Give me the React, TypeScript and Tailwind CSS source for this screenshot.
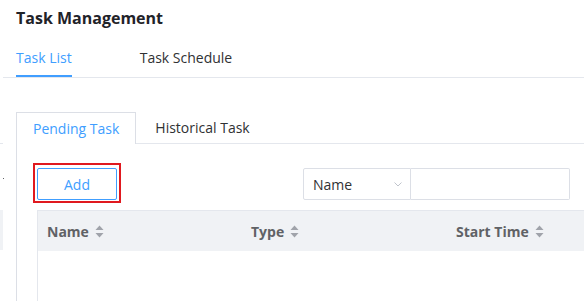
const SortIcon = () => (
  <svg width="9" height="13" viewBox="0 0 9 13" className="ml-[6px]">
    <path d="M4.5 0.5 L8.5 5 L0.5 5 Z" fill="#a0a3aa" />
    <path d="M4.5 12.5 L8.5 8 L0.5 8 Z" fill="#a0a3aa" />
  </svg>
);

const columns = ["Name", "Type", "Start Time"];

const App = () => {
  return (
    <div
      className="relative w-[584px] h-[301px] overflow-hidden bg-white"
      style={{ fontFamily: '"Open Sans", "Noto Sans", sans-serif' }}
    >
      {/* fragment of neighbouring panel on the left edge */}
      <div className="absolute left-0 top-[143px] w-[3px] h-px bg-[#e4e7ed]" />
      <div className="absolute left-[3px] top-[178px] w-px h-px bg-[#606266]" />
      <div className="absolute left-0 top-[210px] w-[3px] h-[40px] bg-[#f0f2f5]" />

      <div className="px-4 pt-[6px]">
        <h1 className="text-[16px] leading-[24px] font-bold text-[#1f2329]">
          Task Management
        </h1>
      </div>

      <div className="ml-[3px] mt-[18px] border-b border-[#e4e7ed]">
        <div className="flex gap-[68px] pl-[13px] text-[14px] leading-[20px]">
          <div className="text-[#409eff] border-b-2 border-[#409eff] pb-[7px]">
            Task List
          </div>
          <div className="text-[#303133] pb-[7px]">Task Schedule</div>
        </div>
      </div>

      <div className="ml-4 mt-[34px] border-l border-[#dcdfe6] h-[300px]">
        <div className="flex h-[32px] text-[14px]">
          <div className="flex items-center px-4 border-t border-r border-[#dcdfe6] text-[#409eff] bg-white">
            Pending Task
          </div>
          <div className="flex items-center pl-[19px] pr-5 border-b border-[#e4e7ed] text-[#303133]">
            Historical Task
          </div>
          <div className="flex-1 border-b border-[#e4e7ed]" />
        </div>

        <div className="pl-5 pt-[24px]">
          <div className="flex items-center">
            <div className="relative">
              <button className="w-[80px] h-[32px] border border-[#409eff] rounded-[2px] text-[14px] text-[#409eff] bg-white">
                Add
              </button>
              <div className="absolute -left-[4px] -top-[5px] w-[88px] h-[40px] border-2 border-[#e0191f]" />
            </div>
            <div className="ml-[186px] flex h-[32px] text-[14px]">
              <div className="w-[108px] flex items-center justify-between pl-[9px] pr-[8px] border border-[#dcdfe6] rounded-l-[2px] text-[#303133]">
                <span>Name</span>
                <svg width="8" height="5" viewBox="0 0 8 5">
                  <path d="M0.5 0.5 L4 4 L7.5 0.5" fill="none" stroke="#c0c4cc" strokeWidth="1" />
                </svg>
              </div>
              <div className="w-[159px] border border-l-0 border-[#dcdfe6] rounded-r-[2px]" />
            </div>
          </div>

          <div className="mt-[10px] border-t border-l border-[#e4e7ed] w-[700px] h-[200px]">
            <div className="flex h-[40px] bg-[#f0f2f5]">
              {columns.map((c) => (
                <div
                  key={c}
                  className="w-[205px] first:w-[204px] flex items-center pl-[9px] text-[14px] font-bold text-[#606266]"
                >
                  {c}
                  <SortIcon />
                </div>
              ))}
            </div>
          </div>
        </div>
      </div>
    </div>
  );
};

export default App;
